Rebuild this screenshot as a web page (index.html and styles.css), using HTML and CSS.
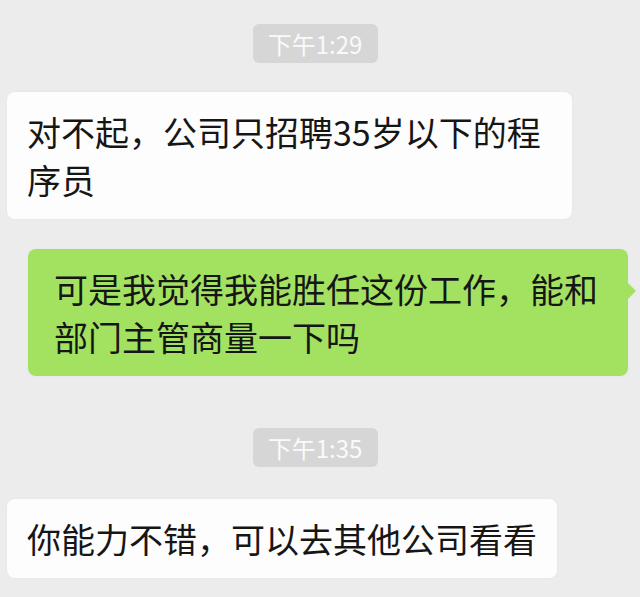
FILE: index.html
```html
<!DOCTYPE html>
<html lang="zh-CN">
<head>
  <meta charset="UTF-8" />
  <title>聊天记录</title>
  <link rel="stylesheet" href="styles.css">
</head>
<body>
  <div class="chat">
    <div class="time-row"><span class="time">下午1:29</span></div>

    <div class="msg left">
      <div class="bubble white">对不起，公司只招聘35岁以下的程序员</div>
    </div>

    <div class="msg right">
      <div class="bubble green">可是我觉得我能胜任这份工作，能和部门主管商量一下吗</div>
    </div>

    <div class="time-row second"><span class="time">下午1:35</span></div>

    <div class="msg left">
      <div class="bubble white">你能力不错，可以去其他公司看看</div>
    </div>
  </div>
</body>
</html>
```

FILE: styles.css
```css
body {
  margin: 0;
  background: #ececec;
  font-family: "Noto Sans CJK SC", "Noto Sans", sans-serif;
  width: 640px;
  height: 597px;
  overflow: hidden;
}

.chat {
  display: flex;
  flex-direction: column;
  padding: 24px 0 0;
}

.time-row {
  display: flex;
  justify-content: center;
  padding-right: 10px;
  margin-bottom: 29px;
}

.time-row.second {
  margin-top: 22px;
  margin-bottom: 32px;
}

.time {
  background: #d6d6d6;
  color: #fafafa;
  font-size: 24px;
  line-height: 39px;
  height: 39px;
  padding: 0 15px;
  border-radius: 6px;
  width: 95px;
  text-align: center;
}

.msg {
  display: flex;
  margin-bottom: 30px;
}

.msg.left {
  justify-content: flex-start;
  padding-left: 7px;
}

.msg.right {
  justify-content: flex-end;
  padding-right: 12px;
}

.bubble {
  position: relative;
  font-size: 34px;
  line-height: 48px;
  color: #161616;
  padding: 16px 20px 15px;
  border-radius: 8px;
  box-shadow: 0 0 3px rgba(0, 0, 0, 0.04);
}

.bubble.white {
  background: #fdfdfd;
  max-width: 525px;
}

.bubble.green {
  background: #a3e261;
  max-width: 548px;
  padding: 16px 26px 15px;
}

.bubble.green::after {
  content: "";
  position: absolute;
  right: -8px;
  top: 34px;
  border-left: 8px solid #a3e261;
  border-top: 8px solid transparent;
  border-bottom: 8px solid transparent;
}
```
